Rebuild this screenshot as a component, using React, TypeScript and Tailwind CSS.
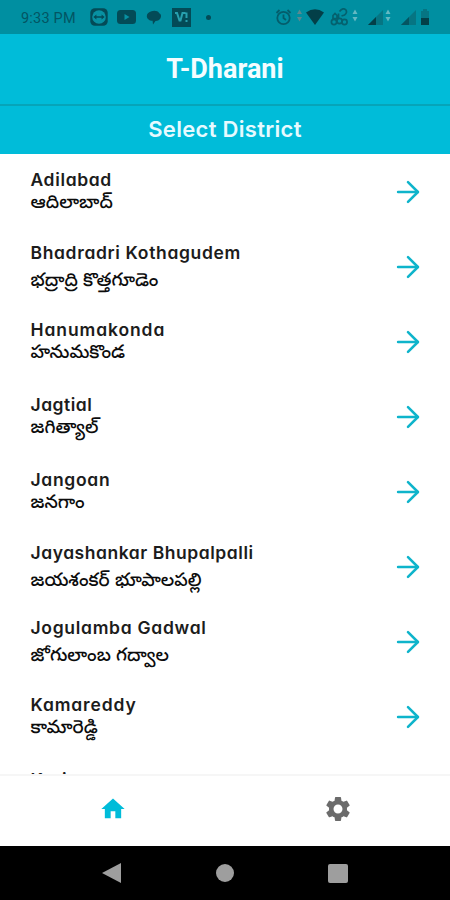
import React from "react";
import { ArrowRight } from "lucide-react";
import { MdSettings } from "react-icons/md";

interface District {
  name: string;
  telugu?: string;
  nameClass: string;
  teluguClass?: string;
}

const districts: District[] = [
  { name: "Adilabad", telugu: "ఆదిలాబాద్", nameClass: "tracking-[0.65px]" },
  { name: "Bhadradri Kothagudem", telugu: "భద్రాద్రి కొత్తగూడెం", nameClass: "tracking-[0.65px] -mt-0.5", teluguClass: "mt-[7px]" },
  { name: "Hanumakonda", telugu: "హనుమకొండ", nameClass: "tracking-[0.9px]" },
  { name: "Jagtial", telugu: "జగిత్యాల్", nameClass: "tracking-[0.5px]" },
  { name: "Jangoan", telugu: "జనగాం", nameClass: "tracking-[0.7px]" },
  { name: "Jayashankar Bhupalpalli", telugu: "జయశంకర్ భూపాలపల్లి", nameClass: "tracking-[0.54px] -mt-0.5", teluguClass: "mt-[7px]" },
  { name: "Jogulamba Gadwal", telugu: "జోగులాంబ గద్వాల", nameClass: "tracking-[0.7px] -mt-0.5", teluguClass: "mt-[7px]" },
  { name: "Kamareddy", telugu: "కామారెడ్డి", nameClass: "tracking-[0.85px]" },
  { name: "Karimnagar", nameClass: "tracking-[0.65px]" },
];

const StatusBar = () => (
  <div className="flex h-[34px] shrink-0 items-center bg-[#008fa1] pl-[21px] pr-[20px] text-[#035563]">
    <span className="w-[56px] whitespace-nowrap pt-1 font-['Roboto'] text-[14.5px] tracking-[0.2px]">9:33 PM</span>
    {/* notifications */}
    <svg className="ml-[13px]" width="18" height="18" viewBox="0 0 18 18">
      <rect x="0.3" y="0.3" width="17.4" height="17.4" rx="4.5" fill="#034b57" />
      <circle cx="9" cy="9" r="6.8" fill="#0891a2" />
      <path d="M3.4 9l3-2.4v1.6h5.2V6.6l3 2.4-3 2.4V9.8H6.4v1.6z" fill="#034b57" />
    </svg>
    <svg className="ml-[9px]" width="19" height="14" viewBox="0 0 19 14">
      <rect width="19" height="14" rx="3.5" fill="#034b57" />
      <path d="M7.5 4v6l5-3z" fill="#0891a2" />
    </svg>
    <svg className="ml-[10px]" width="16" height="15" viewBox="0 0 16 15">
      <path d="M5.5 1.2C8 .2 12 .6 13.2 3.2c2 .6 2.3 3.2 1.3 5-.9 1.5-2.500 2.600-5 2.800L7 14.500l-.4-3.700C3 10.800.8 8.600.8 6 .8 3.600 3 1.800 5.500 1.200z" fill="#034b57" />
    </svg>
    <svg className="ml-[10px]" width="19" height="19" viewBox="0 0 19 19">
      <rect width="19" height="19" fill="#034b57" />
      <path d="M3 5h2l2.500 7.500h1L10.500 5h3M14.500 4.500v5.500M14.500 12v2" fill="none" stroke="#27a0ae" strokeWidth="2" />
    </svg>
    <span className="ml-[15px] h-[5px] w-[5px] rounded-full bg-[#034b57]" />
    {/* system state */}
    <svg className="ml-auto" width="155" height="22" viewBox="275 6 155 22">
      <g fill="none" stroke="#045d6b" strokeWidth="1.8">
        <circle cx="283.5" cy="18" r="6.2" />
        <path d="M276.5 13l3-3M290.5 13l-3-3M283.5 14.5V18l2.5 2" />
      </g>
      <path d="M297 14l2.5-4.5L302 14zM297 17l2.5 4.5L302 17z" fill="#5a8990" />
      <path d="M306 12.500q9-6.500 18 0L315 25z" fill="#033f48" />
      <g fill="none" stroke="#04616e" strokeWidth="1.7">
        <path d="M339.500 11.500q3.500-4.500 6.500-1.500 1.500 3-1.500 5l-3 1M333 15.500l2-2 2 2v3h-4zM338.500 13.500v5" />
        <circle cx="334" cy="22" r="2.6" />
        <circle cx="339.5" cy="21" r="2.6" />
        <circle cx="344.5" cy="22" r="2.6" />
      </g>
      <path d="M352.500 14l2.500-4.500 2.500 4.500zM352.500 17l2.500 4.500 2.500-4.500z" fill="#63b8c2" />
      <path d="M368 25l15-15v15z" fill="#067583" />
      <path d="M368 25l8-8v8z" fill="#033f48" />
      <path d="M385.500 14l2.500-4.500 2.500 4.500zM385.500 17l2.500 4.500 2.500-4.500z" fill="#63b8c2" />
      <path d="M401 25l15-15v15z" fill="#067583" />
      <path d="M401 25l8-8v8z" fill="#045562" />
      <path d="M421 11h2V9h4v2h2v14h-8z" fill="#067583" />
      <path d="M421 18h8v7h-8z" fill="#033f48" />
    </svg>
  </div>
);

const DistrictRow: React.FC<{ district: District }> = ({ district }) => (
  <div className="flex h-[75px] shrink-0 items-start justify-between pl-[30.5px] pr-[25.5px]">
    <div className="whitespace-nowrap pt-[14px] text-[17.5px] leading-[24px] text-[#1c1c1c]">
      <p className={`font-['Inter'] font-semibold [font-feature-settings:'cv11'] ${district.nameClass}`}>{district.name}</p>
      {district.telugu && (
        <p className={`font-['Noto_Sans_Telugu','Noto_Sans',sans-serif] text-[18.5px] font-medium leading-[22px] text-[#0c0c0c] ${district.teluguClass ?? "mt-[2px]"}`}>
          {district.telugu}
        </p>
      )}
    </div>
    <ArrowRight className="mt-[21px] text-[#0eb4cb]" size={34} strokeWidth={1.8} />
  </div>
);

const App = () => {
  return (
    <div className="flex h-[900px] w-[450px] flex-col overflow-hidden bg-white">
      <StatusBar />
      <header className="flex h-[72px] shrink-0 items-center justify-center border-b-2 border-[#06a4b9] bg-[#00bcd9]">
        <h1 className="font-['Roboto'] text-[27px] font-bold text-[#f4fdff]">T-Dharani</h1>
      </header>
      <div className="flex h-[48px] shrink-0 items-center justify-center bg-[#00bcd9] pb-0.5">
        <h2 className="font-['Inter'] text-[22px] font-semibold tracking-[0.3px] text-[#e6faff]">Select District</h2>
      </div>

      <main className="flex h-[620px] shrink-0 flex-col overflow-hidden">
        {districts.map((district) => (
          <DistrictRow key={district.name} district={district} />
        ))}
      </main>

      <nav className="grid h-[72px] shrink-0 grid-cols-2 place-items-center border-t-2 border-[#f6f6f6] bg-white pb-1">
        <svg className="text-[#00bcd9]" width="28" height="28" viewBox="0 0 24 24" fill="currentColor">
          <path d="M10 20v-6h4v6h5v-8h3L12 3 2 12h3v8z" />
        </svg>
        <MdSettings className="text-[#6b6b6b]" size={30} />
      </nav>

      <div className="grid h-[54px] shrink-0 grid-cols-3 place-items-center bg-black px-[56px]">
        <svg width="20" height="20" viewBox="0 0 20 20" fill="#9e9e9e">
          <path d="M0 10L19 0v20z" />
        </svg>
        <span className="h-[18px] w-[18px] rounded-full bg-[#9e9e9e]" />
        <span className="h-[19px] w-[20px] rounded-[2px] bg-[#9e9e9e]" />
      </div>
    </div>
  );
};

export default App;
